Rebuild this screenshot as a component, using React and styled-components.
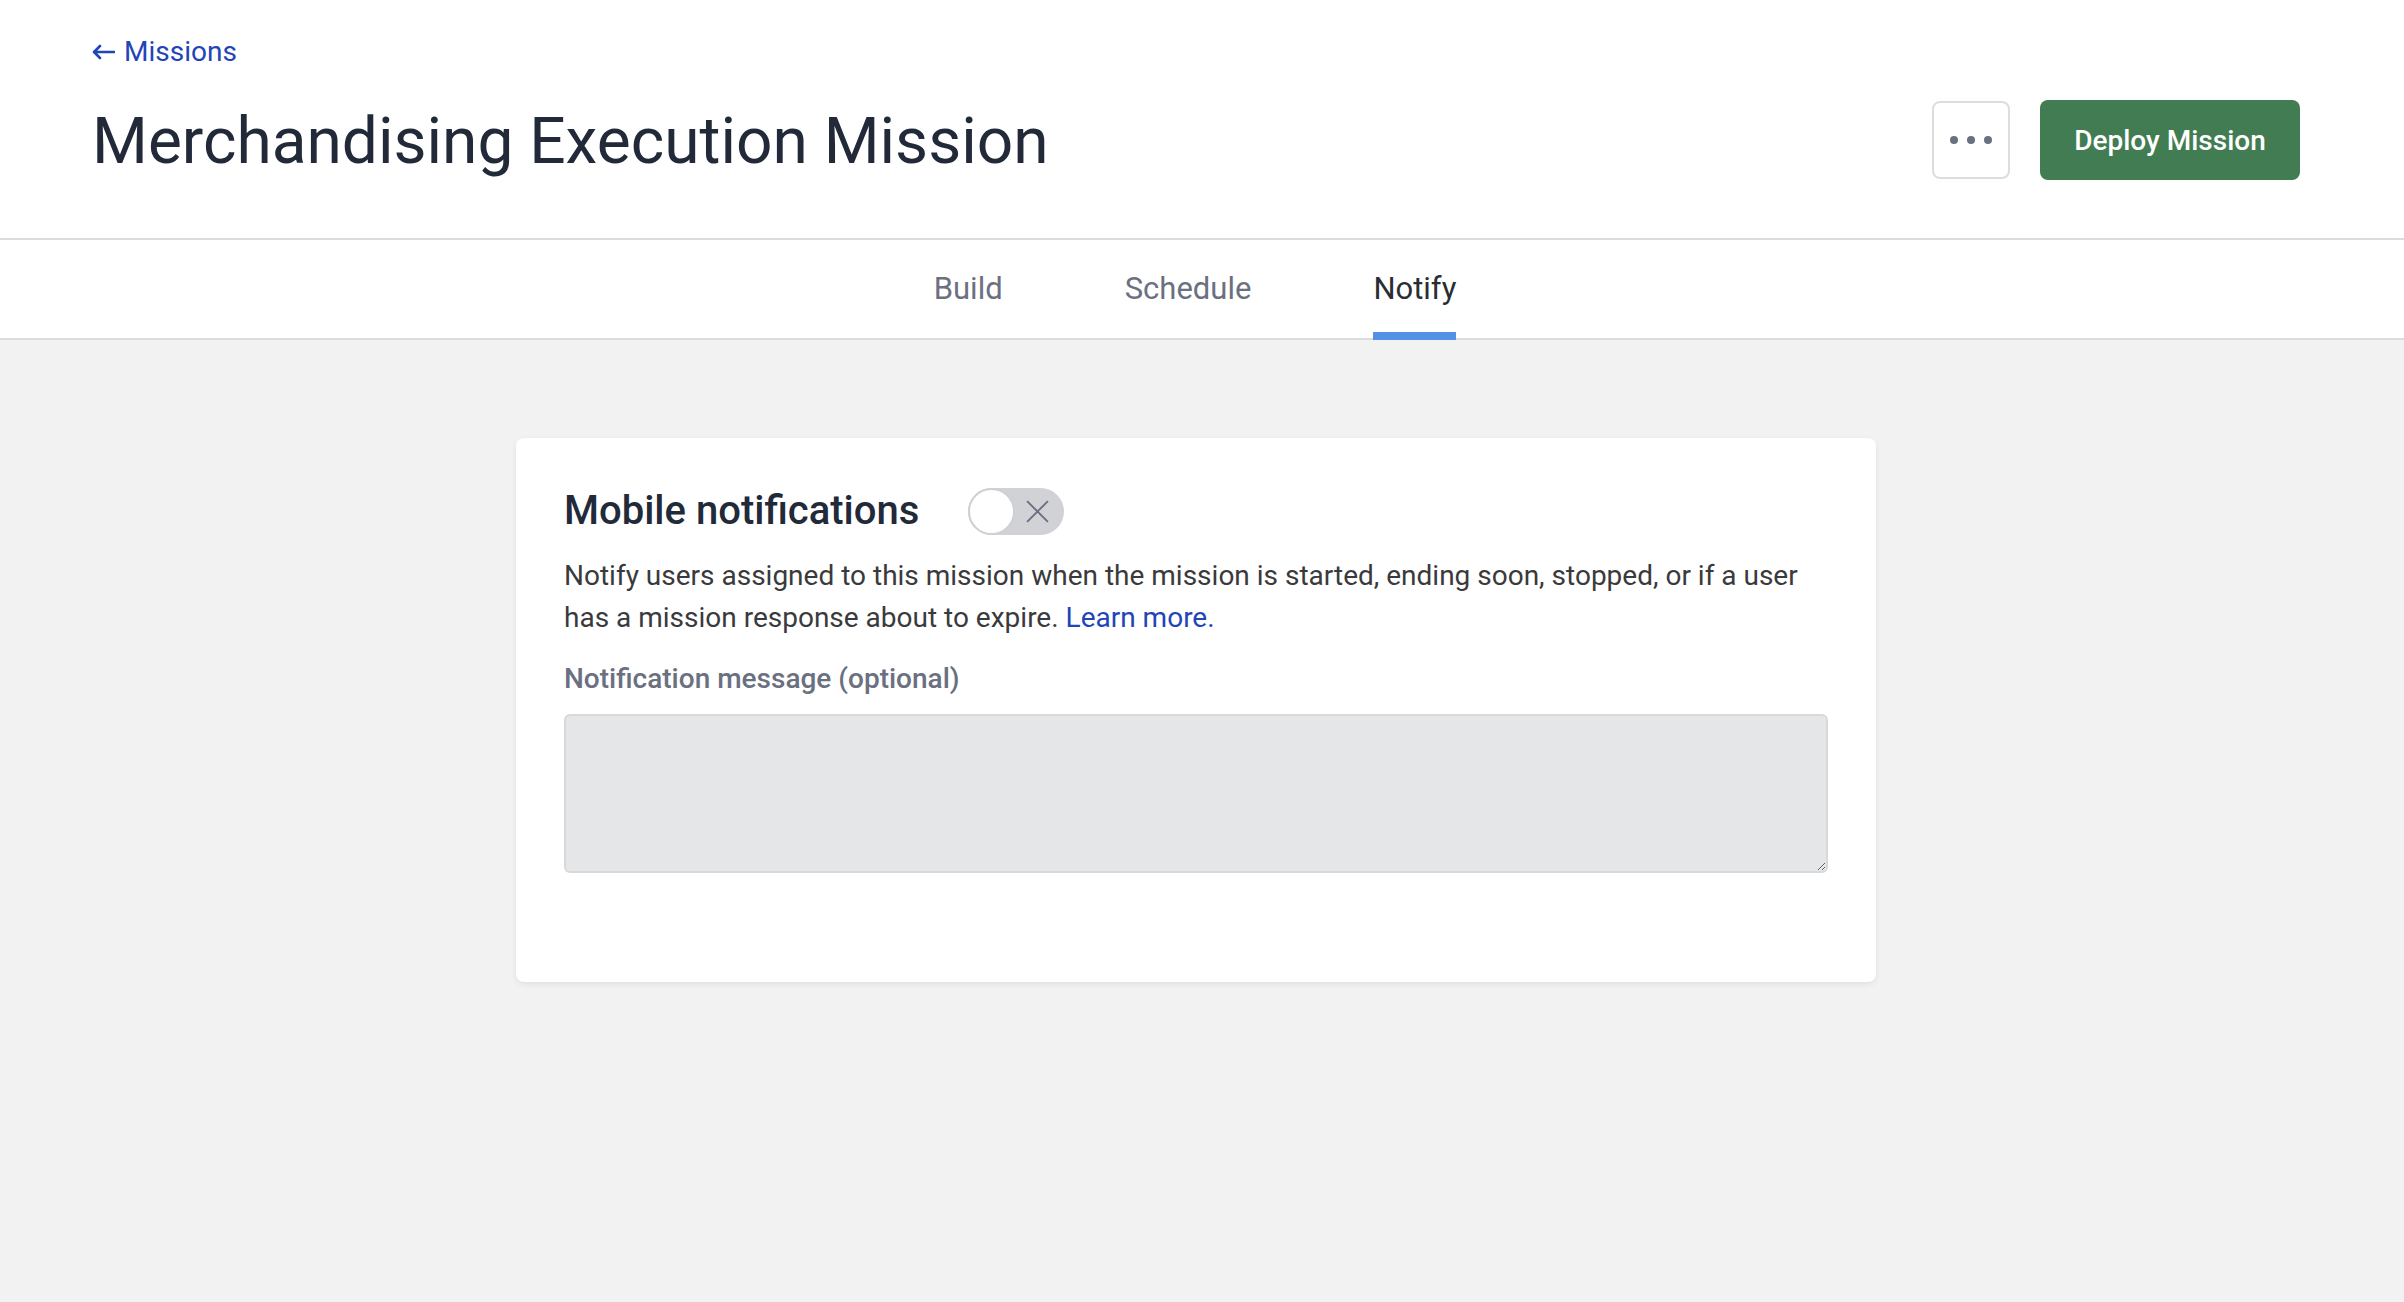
import React, { useState } from "react";
import styled, { createGlobalStyle } from "styled-components";

const GlobalStyle = createGlobalStyle`
    html, body {
        margin: 0;
        padding: 0;
        background: #f2f2f2;
        font-family: Roboto, "Liberation Sans", Arial, sans-serif;
    }
    * {
        box-sizing: border-box;
    }
`;

const Page = styled.div`
    min-height: 1302px;
    background: #f2f2f2;
`;

const Header = styled.header`
    background: #ffffff;
    border-bottom: 2px solid #dcdcdc;
    padding: 34px 104px 58px 92px;
`;

const BackLink = styled.a`
    display: inline-flex;
    align-items: center;
    gap: 9px;
    font-size: 28px;
    line-height: 36px;
    color: #1f45b8;
    text-decoration: none;
    cursor: pointer;

    svg {
        width: 23px;
        height: 16px;
    }
`;

const TitleRow = styled.div`
    display: flex;
    align-items: center;
    justify-content: space-between;
    margin-top: 30px;
    height: 80px;
`;

const Title = styled.h1`
    margin: 0;
    font-size: 64px;
    line-height: 80px;
    font-weight: 400;
    color: #222a39;
    padding-top: 4px;
`;

const Actions = styled.div`
    display: flex;
    align-items: center;
    gap: 30px;
`;

const MoreButton = styled.button`
    width: 78px;
    height: 78px;
    border: 2px solid #dddddd;
    border-radius: 8px;
    background: #ffffff;
    display: flex;
    align-items: center;
    justify-content: center;
    gap: 9px;
    cursor: pointer;
    padding: 0;
`;

const Dot = styled.span`
    width: 8px;
    height: 8px;
    border-radius: 50%;
    background: #6b7080;
`;

const DeployButton = styled.button`
    width: 260px;
    height: 80px;
    border: none;
    border-radius: 8px;
    background: #427c53;
    color: #ffffff;
    font-family: inherit;
    font-size: 28px;
    font-weight: 500;
    cursor: pointer;
`;

const TabBar = styled.nav`
    background: #ffffff;
    border-bottom: 2px solid #dcdcdc;
    display: flex;
    justify-content: center;
    gap: 122px;
    padding-right: 14px;
`;

const Tab = styled.div`
    padding: 29px 0 23px;
    margin-bottom: -2px;
    font-size: 31px;
    line-height: 40px;
    color: ${({ active }) => (active ? "#2a2d33" : "#6b7080")};
    border-bottom: 8px solid ${({ active }) => (active ? "#5391e6" : "transparent")};
    cursor: pointer;
`;

const Content = styled.main`
    display: flex;
    justify-content: center;
    padding: 98px 12px 0 0;
`;

const Card = styled.section`
    width: 1360px;
    background: #ffffff;
    border-radius: 8px;
    box-shadow: 0 2px 6px rgba(0, 0, 0, 0.08);
    padding: 49px 48px 48px;
`;

const CardHeading = styled.div`
    display: flex;
    align-items: center;
    gap: 49px;
    height: 48px;
`;

const CardTitle = styled.h2`
    margin: 0;
    font-size: 40px;
    line-height: 48px;
    font-weight: 500;
    color: #222a39;
`;

const Switch = styled.button`
    position: relative;
    width: 96px;
    height: 47px;
    border-radius: 24px;
    border: none;
    background: ${({ on }) => (on ? "#427c53" : "#d1d2d6")};
    padding: 0;
    cursor: pointer;
    flex-shrink: 0;
`;

const Knob = styled.span`
    position: absolute;
    top: 0;
    left: ${({ on }) => (on ? "49px" : "0")};
    width: 47px;
    height: 47px;
    border-radius: 50%;
    background: #ffffff;
    border: 2px solid #cfd0d4;
`;

const SwitchIcon = styled.svg`
    position: absolute;
    top: 11px;
    right: 14px;
    width: 25px;
    height: 25px;
`;

const Description = styled.p`
    margin: 20px 0 0;
    font-size: 28px;
    line-height: 42px;
    color: #3a3a3c;
`;

const LearnMore = styled.a`
    color: #1f45b8;
    text-decoration: none;
    cursor: pointer;
`;

const FieldLabel = styled.label`
    display: block;
    margin-top: 22px;
    font-size: 28px;
    line-height: 36px;
    font-weight: 500;
    color: #6b7080;
`;

const MessageInput = styled.textarea`
    display: block;
    width: 100%;
    height: 159px;
    margin: 17px 0 61px;
    background: #e5e6e8;
    border: 2px solid #d8d9db;
    border-radius: 6px;
    font-family: inherit;
    font-size: 27px;
    padding: 12px 16px;
    resize: vertical;
    outline: none;
`;

const App = () => {
    const [on, setOn] = useState(false);

    return (
        <Page>
            <GlobalStyle />
            <Header>
                <BackLink href="#">
                    <svg viewBox="0 0 23 16" fill="none" stroke="#1f45b8" strokeWidth="2.6" strokeLinecap="round" strokeLinejoin="round">
                        <path d="M22 8 H2 M8 2 L2 8 L8 14" />
                    </svg>
                    Missions
                </BackLink>
                <TitleRow>
                    <Title>Merchandising Execution Mission</Title>
                    <Actions>
                        <MoreButton aria-label="More">
                            <Dot />
                            <Dot />
                            <Dot />
                        </MoreButton>
                        <DeployButton>Deploy Mission</DeployButton>
                    </Actions>
                </TitleRow>
            </Header>
            <TabBar>
                <Tab>Build</Tab>
                <Tab>Schedule</Tab>
                <Tab active>Notify</Tab>
            </TabBar>
            <Content>
                <Card>
                    <CardHeading>
                        <CardTitle>Mobile notifications</CardTitle>
                        <Switch on={on} onClick={() => setOn(!on)}>
                            {!on && (
                                <SwitchIcon viewBox="0 0 24 24" fill="none" stroke="#6b7080" strokeWidth="1.8">
                                    <path d="M2 2 L22 22 M22 2 L2 22" />
                                </SwitchIcon>
                            )}
                            <Knob on={on} />
                        </Switch>
                    </CardHeading>
                    <Description>
                        Notify users assigned to this mission when the mission is started, ending soon, stopped, or if a user
                        has a mission response about to expire. <LearnMore href="#">Learn more.</LearnMore>
                    </Description>
                    <FieldLabel>Notification message (optional)</FieldLabel>
                    <MessageInput />
                </Card>
            </Content>
        </Page>
    );
};

export default App;
